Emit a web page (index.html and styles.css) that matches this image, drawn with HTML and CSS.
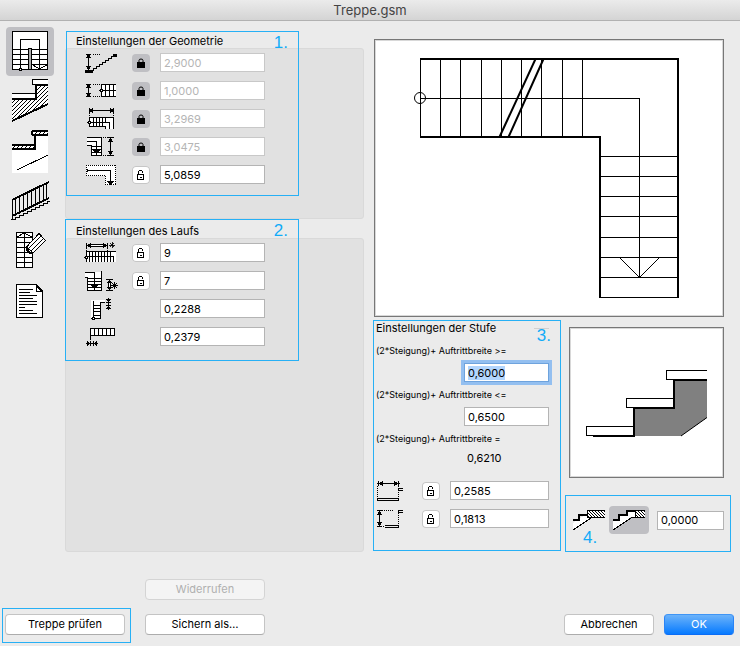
FILE: index.html
```html
<!DOCTYPE html>
<html lang="de">
<head>
<meta charset="utf-8">
<title>Treppe.gsm</title>
<link rel="stylesheet" href="styles.css">
</head>
<body>
<svg class="defs" aria-hidden="true">
  <defs>
    <pattern id="hatch" width="4" height="4" patternUnits="userSpaceOnUse"><path d="M0 3h1v1H0zM1 2h1v1H1zM2 1h1v1H2zM3 0h1v1H3z" fill="#000"/></pattern>
    <pattern id="hatch-back" width="3" height="3" patternUnits="userSpaceOnUse"><path d="M0 0h1v1H0zM1 1h1v1H1zM2 2h1v1H2z" fill="#000"/></pattern>
    <symbol id="locked" viewBox="0 0 18 18"><path d="M5 8h8v6H5z"/><path d="M7 8.500V6.500Q7 5 9 5T11 6.500V8.500" fill="none" stroke="#000"/></symbol>
    <symbol id="unlocked" viewBox="0 0 18 18"><path d="M5.500 8.500h6v5h-6zM6.500 8.500v-3l1-1h2l1 1v1M7.500 11h2" fill="none" stroke="#000"/></symbol>
    <symbol id="star" viewBox="0 0 7 7"><path d="M3.500 0v7M0 3.500h7M1 1l5 5M6 1l-5 5" fill="none" stroke="#000"/></symbol>
  </defs>
</svg>

<header class="titlebar"><h1>Treppe.gsm</h1></header>

<main class="main">
  <nav class="tools" aria-label="Seiten">
    <button type="button" class="tool selected" aria-label="Geometrie">
      <svg viewBox="0 0 48 49">
        <path class="w" d="M6.500 4.500h35v38h-35z"/>
        <path class="n" d="M6 22.500h17M6 27.500h17M6 32.500h17M6 37.500h17M26 22.500h16M26 27.500h16M26 32.500h16M26 37.500h16M14.500 42V12.500h19V42"/>
        <path class="n" d="M26 37.500l7.500 4.500 8-4.500"/>
        <path d="M22.500 42V21.500h3V42" fill="#aaa" stroke="#000"/>
        <path d="M23 22h2v20h-2z" fill="#aaa"/>
        <circle class="w" cx="14.500" cy="42.500" r="1.500"/>
      </svg>
    </button>
    <button type="button" class="tool" aria-label="Laufplatte">
      <svg viewBox="0 0 48 49">
        <path d="M6 22h24V8h12v19L6 44z" fill="#fff"/>
        <path d="M6 22h24V8h12v19L6 44z" fill="url(#hatch)"/>
        <path class="w" d="M42 2.500H27l-1 1v3l1 1h15M6 16.500h23v5H6"/>
        <path class="n t" d="M6 22h24V8h12M6 44l36-17"/>
      </svg>
    </button>
    <button type="button" class="tool" aria-label="Belag">
      <svg viewBox="0 0 48 49">
        <path d="M6 23h24V8h12v38H6z" fill="#fff"/>
        <path d="M26 3h16v5H26zM6 17h24v5H6z" fill="#fff"/>
        <path d="M26 3h16v5H26zM6 17h24v5H6z" fill="url(#hatch)"/>
        <path class="n t" d="M42 4H27l-1 1v2l1 1h15M29 8v14M6 22h24M6 18h23"/>
        <path class="n" d="M11 43l31-15"/>
      </svg>
    </button>
    <button type="button" class="tool" aria-label="Geländer">
      <svg viewBox="0 0 48 49">
        <path class="n t" d="M6 23L43 5M6 39l37-18"/>
        <path class="n" d="M6.500 23v19M9.500 22v17M13.500 20v17M17.500 18v17M21.500 16v17M25.500 14v17M29.500 12v17M33.500 10v17M37.500 8v16M40.500 7v16"/>
        <path class="n" d="M5 42.500h4v-2h4v-2h4v-2h4v-2h4v-2h4v-2h4v-2h4v-2h4v-2h3"/>
      </svg>
    </button>
    <button type="button" class="tool" aria-label="Darstellung">
      <svg viewBox="0 0 48 49">
        <path class="w" d="M10.500 5.500h16v35h-16z"/>
        <path class="n" d="M18.500 6v34M10 10.500h17M10 15.500h17M10 20.500h17M10 25.500h17M10 30.500h17M10 35.500h17M11 10l7-4 8 4"/>
        <path class="w" d="M33 6.500l6.500 7L27 26l-6.500-6z"/>
        <path class="n" d="M35 9L22.500 21.500M37.500 11.500L25 24"/>
        <path d="M20 15v6l6 6h-3l-3-3z"/>
      </svg>
    </button>
    <button type="button" class="tool" aria-label="Liste">
      <svg viewBox="0 0 48 49">
        <path class="w" d="M10.500 7.500h20l6 6v27h-26z"/>
        <path class="n" d="M30.500 8v6h6"/><path d="M31 8l6 6h-3l-3-3z"/>
        <path class="n" d="M13 12.500h14M13 15.500h11M13 18.500h18M13 21.500h14M13 24.500h18M13 27.500h18M13 30.500h6M13 33.500h14M13 36.500h18"/>
      </svg>
    </button>
  </nav>

  <div class="settings">
    <section class="section">
      <h2>Einstellungen der Geometrie</h2>
      <div class="group geometry">
        <div class="row">
          <svg class="ic" viewBox="0 0 36 23">
            <path class="n" d="M2 5.500h5M4.500 5v17"/><path class="n dot" d="M9 5.500h8"/>
            <path d="M4 5h1l2 4H2zM4 21h1l2-4H2zM1 21h8v3H1zM29 5h4v3h-4z"/>
            <path class="n" d="M9 21.500v-2h3v-2h3v-2h3v-2h3v-2h3v-2h3v-2h3v-1"/>
          </svg>
          <button type="button" class="lock on" aria-label="Höhe gesperrt"><svg><use href="#locked"/></svg></button>
          <input class="field" aria-label="Höhe" value="2,9000" disabled>
        </div>
        <div class="row">
          <svg class="ic" viewBox="0 0 36 23">
            <path class="n" d="M2 7.500h5M4.500 7v13M2 19.500h5"/><path class="n dot" d="M9 7.500h8M9 19.500h8"/>
            <path d="M4 7h1l2 4H2zM4 20h1l2-4H2z"/>
            <path class="wf" d="M17 7h15v13H17z"/>
            <path class="n" d="M32 7.500H17.500v12H32M17 13.500h15M21.500 7v13M25.500 7v13M29.500 7v13"/>
            <circle class="w" cx="17.500" cy="13.500" r="1.500"/>
          </svg>
          <button type="button" class="lock on" aria-label="Laufbreite gesperrt"><svg><use href="#locked"/></svg></button>
          <input class="field" aria-label="Laufbreite" value="1,0000" disabled>
        </div>
        <div class="row">
          <svg class="ic" viewBox="0 0 36 23">
            <path class="n" d="M5.500 3v5M29.500 3v5M5 5.500h25"/><path class="n dot" d="M5.500 8v3M29.500 8v3"/>
            <path d="M5 5v1l4 2V3zM30 5v1l-4 2V3z"/>
            <path class="wf" d="M5 12h25v12h-9v-2H5z"/>
            <path class="n" d="M29.500 24V12.500h-24v9h16V24M5 17.500h20.500V24M9.500 12v10M12.500 12v10M15.500 12v10M18.500 12v10M21.500 12v6"/>
            <circle class="w" cx="5.500" cy="17.500" r="1.500"/>
          </svg>
          <button type="button" class="lock on" aria-label="Länge gesperrt"><svg><use href="#locked"/></svg></button>
          <input class="field" aria-label="Länge" value="3,2969" disabled>
        </div>
        <div class="row">
          <svg class="ic" viewBox="0 0 36 23">
            <path class="wf" d="M3 4h15v19H7V13H3z"/>
            <path class="n" d="M3 4.500h14.500v18h-10v-10H3M3 8.500h9.500V22M7 13.500h10M7 16.500h10M7 19.500h10"/>
            <path d="M9 17h7l-3 4h-1z"/>
            <path class="n" d="M24 4.500h6M26.500 4v19M24 22.500h6"/><path class="n dot" d="M19 4.500h5M19 22.500h5"/>
            <path d="M26 5h1l2 4h-5zM26 22h1l2-4h-5z"/>
          </svg>
          <button type="button" class="lock on" aria-label="Tiefe gesperrt"><svg><use href="#locked"/></svg></button>
          <input class="field" aria-label="Tiefe" value="3,0475" disabled>
        </div>
        <div class="row">
          <svg class="ic" viewBox="0 0 36 23">
            <path class="wf" d="M2 4h30v20H21v-9H2z"/>
            <path class="n dot" d="M2 4.500h30M31.500 4v20M32 23.500H21M21.500 24v-9M21 14.500H2M2.500 15V4"/>
            <path class="n" d="M3 9.500h23.500V22M3.500 8v3"/><path d="M23 20h7l-3 4h-1z"/>
          </svg>
          <button type="button" class="lock" aria-label="Lauflänge sperren"><svg><use href="#unlocked"/></svg></button>
          <input class="field" aria-label="Lauflänge" value="5,0859">
        </div>
      </div>
      <span class="callout c1"><b>1.</b></span>
    </section>

    <section class="section grow">
      <h2>Einstellungen des Laufs</h2>
      <div class="group">
        <div class="row">
          <svg class="ic" viewBox="0 0 36 23">
            <path class="w" d="M5 5.500h16v2H5z"/><path class="n" d="M2.500 4v5M23.500 4v5"/><path class="n dot" d="M2.500 9v3M23.500 9v3"/>
            <path d="M3 6v1l4 2V4zM23 6v1l-4 2V4z"/><use href="#star" x="25" y="3" width="6" height="6"/>
            <path class="wf" d="M2 12h30v11H2z"/>
            <path class="n" d="M2 12.500h30M2 17.500h27.500V23M2.500 12v11M5.500 12v11M8.500 12v11M11.500 12v11M14.500 12v11M17.500 12v11M20.500 12v11M23.500 12v11M26.500 12v11"/>
            <circle class="w" cx="2.500" cy="18.500" r="1.500"/>
          </svg>
          <button type="button" class="lock" aria-label="Stufenzahl sperren"><svg><use href="#unlocked"/></svg></button>
          <input class="field" aria-label="Stufenzahl erster Lauf" value="9">
        </div>
        <div class="row">
          <svg class="ic" viewBox="0 0 36 23">
            <path class="wf" d="M1 5h17v19H3V11H1z"/>
            <path class="n" d="M1 5.500h9.500V23M17.500 4v19.500h-14v-13H1M3 11.500h14M3 14.500h14M3 17.500h14M3 20.500h14"/>
            <path d="M7 18h7l-3 4h-1z"/>
            <path class="n" d="M22 12.500h7M22 23.500h7"/><path class="w" d="M24.500 15.500h2v6h-2z"/>
            <path d="M25 13h1l2 3h-5zM25 23h1l2-3h-5z"/><use href="#star" x="27" y="15" width="7" height="7"/>
          </svg>
          <button type="button" class="lock" aria-label="Stufenzahl sperren"><svg><use href="#unlocked"/></svg></button>
          <input class="field" aria-label="Stufenzahl zweiter Lauf" value="7">
        </div>
        <div class="row">
          <svg class="ic" viewBox="0 0 36 23">
            <path class="wf" d="M7 5h14v3h-4v16H7z"/>
            <path class="n" d="M9.500 6v17.500h7V7.500H21M9 10.500h8M9 13.500h8M9 16.500h8M9 20.500h8"/>
            <circle class="w" cx="9.500" cy="23.500" r="1.500"/>
            <path class="n" d="M24.500 3v12M22 7.500h5M22 10.500h5"/><path d="M22 4h5l-2 3h-1zM22 14h5l-2-3h-1z"/>
          </svg>
          <input class="field" aria-label="Auftritt erster Lauf" value="0,2288">
        </div>
        <div class="row">
          <svg class="ic" viewBox="0 0 36 23">
            <path class="wf" d="M6 5h25v7H6z"/>
            <path class="n" d="M6.500 17V5.500H31M6 12.500h25M10.500 5v7M14.500 5v7M18.500 5v7M22.500 5v7M26.500 5v7M30.500 5v7"/>
            <path class="n" d="M2 20.500h12M6.500 18v5M9.500 18v5"/><path d="M3 18v5l3-2v-1zM13 18v5l-3-2v-1z"/>
          </svg>
          <input class="field" aria-label="Auftritt zweiter Lauf" value="0,2379">
        </div>
      </div>
      <span class="callout c2"><b>2.</b></span>
    </section>
  </div>

  <div class="right">
    <div class="preview">
      <svg viewBox="1 1 348 276" role="img" aria-label="Grundriss">
        <path class="n" d="M46.500 20v78M66.500 20v78M86.500 20v78M107.500 20v78M127.500 20v78M147.500 20v78M167.500 20v78M188.500 20v78M208.500 20v78M46 59.500h219.500V238M226 117.500h78M226 137.500h78M226 157.500h78M226 177.500h78M226 198.500h78M226 218.500h78M226 238.500h78M226 258.500h79"/>
        <path class="n t" d="M46 20h259M304 19v239M46 98h181M226 97v162"/>
        <path class="s t" d="M125.500 98l36-78M134.500 98l35-78"/>
        <path class="s" d="M246 219l19.500 19.500L285 219"/><circle class="s" cx="46" cy="59" r="5.500"/>
      </svg>
    </div>
    <div class="lower">
      <section class="step">
        <h2><span>Einstellungen der Stufe</span></h2>
        <div class="rule"><label for="min">(2*Steigung)+ Auftrittbreite &gt;=</label><input class="field active" id="min" value="0,6000"></div>
        <div class="rule"><label for="max">(2*Steigung)+ Auftrittbreite &lt;=</label><input class="field" id="max" value="0,6500"></div>
        <div class="rule"><label for="sum">(2*Steigung)+ Auftrittbreite =</label><output id="sum">0,6210</output></div>
        <div class="row">
          <svg class="ic" viewBox="0 0 36 23">
            <path class="n" d="M1 6.500h23M2.500 4v5M22.500 4v5"/><path d="M3 6v1l4 2V4zM22 6v1l-4 2V4z"/>
            <path class="n dot" d="M1.500 9v12M22.500 9v12"/><path class="n" d="M1.500 21.500h21v2h-21zM27 11.500h-5v2h5"/>
          </svg>
          <button type="button" class="lock" aria-label="Auftritt sperren"><svg><use href="#unlocked"/></svg></button>
          <input class="field" aria-label="Auftritt" value="0,2585">
        </div>
        <div class="row">
          <svg class="ic" viewBox="0 0 36 23">
            <path class="n" d="M1 5.500h5M3.500 5v17M1 21.500h5"/><path d="M3 6h1l2 4H1zM3 21h1l2-4H1z"/>
            <path class="n dot" d="M6 5.500h11M22.500 8v13M5 21.500h4"/><path class="n" d="M9 20.500h13.500v2H9M27 5.500h-5v2h5"/>
          </svg>
          <button type="button" class="lock" aria-label="Steigung sperren"><svg><use href="#unlocked"/></svg></button>
          <input class="field" aria-label="Steigung" value="0,1813">
        </div>
        <span class="callout c3"><b>3.</b></span>
      </section>
      <section class="profile">
        <div class="preview">
          <svg viewBox="1 1 153 149" role="img" aria-label="Stufenprofil">
            <path d="M65 81h40V53h33v38l-26 18H65z" fill="#808080"/>
            <path class="s" d="M112 109l26-18.500"/>
            <path class="w" d="M17.500 99.500h47v9h-47zM57.500 71.500h47v9h-47zM138 43.500H97.500v9H138"/>
            <path class="n t" d="M65 109V81h40V53h33M24 109h42"/>
          </svg>
        </div>
        <div class="ends">
          <button type="button" class="end" aria-label="Anschluss bündig">
            <svg viewBox="0 0 40 28">
              <path d="M4 17l6-4 8-5h3v4L4 24z" fill="#fff"/><path d="M18 4h18v7H18z" fill="#fff"/><path d="M18 4h18v7H18z" fill="url(#hatch-back)"/>
              <path class="n t" d="M4 14h6V9h8"/><path class="n" d="M18 4.500h18M18.500 4v7M18 11.500h18M4 24l18-12"/>
            </svg>
          </button>
          <button type="button" class="end selected" aria-label="Anschluss mit Stufe">
            <svg viewBox="0 0 40 28">
              <path d="M4 14h6V9h7V5h10v6h-5L4 24z" fill="#fff"/><path d="M26 4h10v7H26z" fill="#fff"/><path d="M26 4h10v7H26z" fill="url(#hatch-back)"/>
              <path class="n t" d="M4 14h6V9h8V5h8"/><path class="n" d="M26 4.500h10M26.500 5v6M22 11.500h14M4 24l18-12"/>
            </svg>
          </button>
          <input class="field" aria-label="Versatz" value="0,0000">
          <span class="callout c4"><b>4.</b></span>
        </div>
      </section>
    </div>
  </div>
</main>

<footer class="footer">
  <div class="left-actions">
    <button type="button" class="btn undo" disabled>Widerrufen</button>
    <div class="check"><button type="button" class="btn">Treppe prüfen</button><span class="callout c5"></span></div>
    <button type="button" class="btn">Sichern als…</button>
  </div>
  <div class="right-actions">
    <button type="button" class="btn cancel">Abbrechen</button>
    <button type="button" class="btn ok">OK</button>
  </div>
</footer>
<script src="script.js"></script>
</body>
</html>
```
FILE: styles.css
```css
* { box-sizing: border-box; }

body {
  margin: 0;
  min-height: 100vh;
  display: flex;
  flex-direction: column;
  background: #ebebeb;
  color: #000;
  font: 11px/15px Inter, "Liberation Sans", sans-serif;
}

button, input { font: inherit; color: inherit; }
button { padding: 0; border: 0; background: none; }
svg { display: block; overflow: visible; shape-rendering: crispEdges; }
.defs { position: absolute; width: 0; height: 0; }

.n { fill: none; stroke: #000; }
.w { fill: #fff; stroke: #000; }
.wf { fill: #fff; }
.s { fill: none; stroke: #000; shape-rendering: auto; }
.t { stroke-width: 2; }
.dot { stroke-dasharray: 1 1; }

.titlebar {
  height: 21px;
  border-bottom: 1px solid #b1b1b1;
  background: linear-gradient(#ebebeb, #d4d4d4);
  text-align: center;
}
.titlebar h1 { margin: 0; font-size: 13px; line-height: 20px; font-weight: 400; color: #444; }

.main {
  flex: 1;
  display: grid;
  grid-template-columns: 48px minmax(0, 310fr) minmax(0, 360fr);
  padding: 0 16px 0 6px;
}

.tools { display: flex; flex-direction: column; gap: 1px; padding-top: 6px; }
.tool { width: 48px; height: 49px; border-radius: 4px; }
.tool svg { width: 48px; height: 49px; }
.selected { background: #bfbfc3; }

.settings { display: flex; flex-direction: column; gap: 5px; padding: 13px 0 0 11px; }
.section { position: relative; display: flex; flex-direction: column; }
.grow { flex: 1; }
h2 { margin: 0; font-size: 11px; line-height: 14px; font-weight: 400; }
.section h2 { padding-left: 11px; }
.group {
  flex: 1;
  display: flex;
  flex-direction: column;
  gap: 1px;
  padding-left: 18px;
  border: 1px solid #d9d9d9;
  border-radius: 3px;
  background: #e1e1e1;
}
.geometry { padding-bottom: 30px; }

.row {
  display: grid;
  grid-template-columns: 36px 18px 105px;
  column-gap: 11px;
  align-items: end;
  height: 27px;
  padding-bottom: 4px;
}
.ic { width: 36px; height: 23px; }
.group .lock { margin-left: 1px; }
.row .field { grid-column: 3; }

.field {
  min-width: 0;
  width: 100%;
  height: 19px;
  padding: 0 3px;
  border: 1px solid #b4b4b4;
  border-radius: 0;
  outline: 0;
  background: #fff;
}
.field:disabled { border-color: #c8c8c8; color: #b5b5b5; }
.field.active { border-color: #6ea3dd; box-shadow: 0 0 0 3px #93bff0; }
.field::selection { background: #b2d5fd; color: #000; }

.lock {
  width: 18px;
  height: 18px;
  border-radius: 4px;
  background: #fff;
  box-shadow: inset 0 0 0 1px #c6c6c6;
}
.lock.on { background: #bfbfc3; box-shadow: none; }
.lock svg { width: 18px; height: 18px; }
.lock.on svg { shape-rendering: auto; }

.right { padding: 18px 0 0 10px; }
.preview { border: 1px solid #777; background: #fff; box-shadow: inset 0 0 0 1px #d8d8d8; }
.preview svg { width: 100%; height: auto; }

.lower { display: grid; grid-template-columns: minmax(0, 175fr) minmax(0, 155fr); column-gap: 20px; }
.step { position: relative; padding-top: 4px; }
.step h2 { display: flex; align-items: center; justify-content: space-between; margin: 0 0 10px 2px; }
.step h2::after { content: ""; width: 15px; border-top: 1px solid #d0d0d0; }
.rule { display: flex; flex-direction: column; height: 44px; }
.rule label { margin: 0 0 6px 2px; font-size: 9px; line-height: 12px; white-space: nowrap; }
.rule .field, .rule output { width: 85px; align-self: flex-end; flex: none; }
.rule output { padding: 0 3px; }
.step .row { grid-template-columns: 36px 18px minmax(0, 1fr); column-gap: 10px; height: 28px; padding: 0 0 5px 2px; }

.profile { padding-top: 10px; }
.ends { position: relative; display: grid; grid-template-columns: 40px 40px 1fr; align-items: center; margin-top: 28px; }
.end { height: 28px; border-radius: 4px; }
.end svg { width: 40px; height: 28px; }
.ends .field { width: auto; margin-left: 8px; }

.callout { position: absolute; border: 1px solid #27b0f5; pointer-events: none; }
.callout b { position: absolute; font: 17px/20px "Liberation Sans", sans-serif; color: #12abf8; }
.c1 { left: 1px; top: -3px; width: 233px; height: 165px; }
.c2 { left: 0; top: -5px; width: 234px; height: 142px; }
.c1 b, .c2 b { top: 1px; right: 10px; }
.c3 { left: -1px; top: 3px; width: 188px; height: 231px; }
.c3 b { top: 5px; right: 9px; }
.c4 { inset: -11px -7px -18px -4px; }
.c4 b { left: 17px; top: 32px; }
.c5 { inset: -6px -6px -8px -3px; }

.footer { display: flex; justify-content: space-between; align-items: flex-end; padding: 27px 6px 11px 5px; }
.left-actions { display: grid; grid-template-columns: 120px 120px; gap: 14px 20px; }
.undo { grid-column: 2; }
.check { position: relative; display: grid; }
.right-actions { display: flex; gap: 10px; }
.btn {
  height: 21px;
  border: 1px solid #c4c4c4;
  border-bottom-color: #acacac;
  border-radius: 4px;
  background: #fff;
}
.btn:disabled { border-color: #d4d4d4; background: #f4f4f4; color: #b0b0b0; }
.cancel { width: 90px; }
.ok { width: 70px; border-color: #3f95f5 #2a84f6 #0b6cf5; background: linear-gradient(#6cb3fa, #067aff); color: #fff; }
```
FILE: script.js
```js
const active = document.querySelector(".field.active");
active.focus();
active.select();
```
